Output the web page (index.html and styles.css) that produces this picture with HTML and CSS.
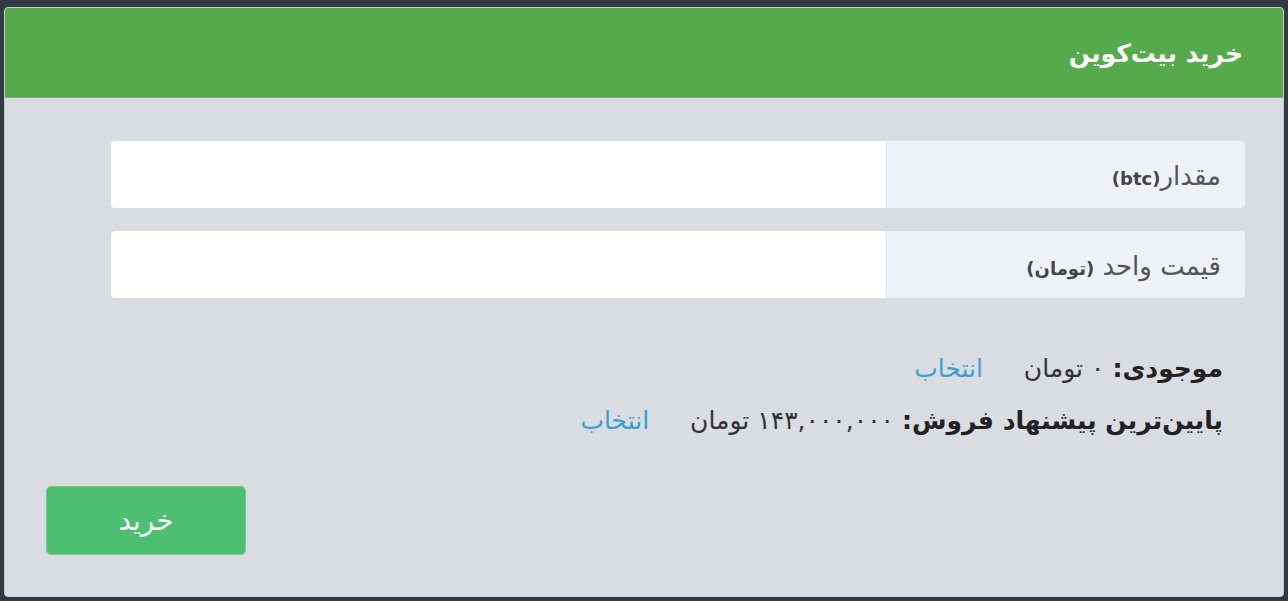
FILE: index.html
```html
<!DOCTYPE html>
<html lang="fa" dir="rtl">
<head>
<meta charset="utf-8">
<title>خرید بیت‌کوین</title>
<link rel="stylesheet" href="styles.css">
</head>
<body>
<div class="card">
  <div class="card-header">
    <h2 class="card-title">خرید بیت‌کوین</h2>
  </div>
  <div class="card-body">
    <div class="form">
      <div class="input-group">
        <label class="addon"><span class="addon-text">مقدار<span class="unit">(btc)</span></span></label>
        <input class="field" type="text">
      </div>
      <div class="input-group">
        <label class="addon"><span class="addon-text">قیمت واحد <span class="unit">(تومان)</span></span></label>
        <input class="field" type="text">
      </div>
    </div>
    <div class="info">
      <p class="line"><b>موجودی:</b> ۰ تومان <a class="pick" href="#">انتخاب</a></p>
      <p class="line"><b>پایین‌ترین پیشنهاد فروش:</b> ۱۴۳,۰۰۰,۰۰۰ تومان <a class="pick" href="#">انتخاب</a></p>
    </div>
    <div class="actions">
      <button class="btn">خرید</button>
    </div>
  </div>
</div>
</body>
</html>
```
FILE: styles.css
```css
html, body {
  margin: 0;
  padding: 0;
  height: 100%;
}
body {
  background: #343a42;
  font-family: "DejaVu Sans", sans-serif;
  padding: 7px 4px 4px 4px;
  box-sizing: border-box;
}
.card {
  height: 590px;
  box-sizing: border-box;
  border: 1px solid #c9ccd0;
  border-radius: 4px;
  background: #d9dce0;
  overflow: hidden;
  display: flex;
  flex-direction: column;
}
.card-header {
  background: #56aa4c;
  height: 89px;
  border-bottom: 1px solid #8aa88a;
  display: flex;
  align-items: center;
  padding-right: 40px;
}
.card-title {
  margin: 2px 0 0 0;
  color: #fff;
  font-size: 25px;
  font-weight: bold;
}
.card-body {
  flex: 1;
  padding: 43px 38px 0 40px;
}
.form {
  margin-left: 66px;
  display: flex;
  flex-direction: column;
  gap: 23px;
}
.input-group {
  display: flex;
  height: 67px;
  border-radius: 4px;
  overflow: hidden;
}
.addon {
  width: 334px;
  flex: none;
  background: #eef1f5;
  border-left: 1px solid #dfe3e8;
  display: flex;
  align-items: center;
  padding-right: 24px;
  color: #555;
  font-size: 26px;
}
.addon-text {
  display: block;
  margin-top: 2px;
}
.unit {
  font-size: 18px;
  font-weight: bold;
  color: #444;
}
.field {
  flex: 1;
  border: none;
  background: #fff;
  margin: 0;
  padding: 0 12px;
  outline: none;
}
.info {
  padding-right: 22px;
  margin-top: 55px;
}
.line {
  margin: 0 0 20px 0;
  font-size: 25px;
  color: #333;
  line-height: 32px;
}
.line b {
  color: #222;
}
.pick {
  color: #3a9fd6;
  text-decoration: none;
  margin-right: 33px;
}
.actions {
  margin-top: 49px;
  display: flex;
  justify-content: flex-end;
}
.btn {
  width: 200px;
  height: 69px;
  background: #4ebe72;
  color: #fff;
  border: 1px solid #6fcc8b;
  border-radius: 5px;
  font-family: inherit;
  font-size: 28px;
  margin-left: 1px;
}
```
